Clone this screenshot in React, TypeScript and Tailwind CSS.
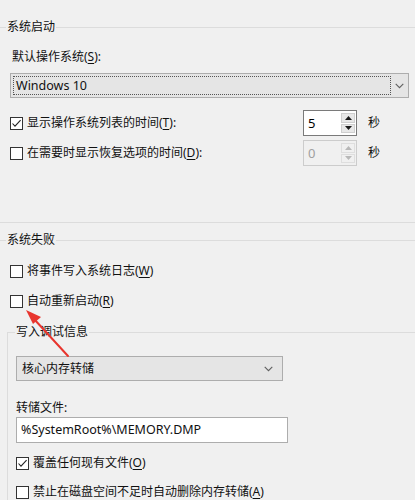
import React from "react";

const FONT = { fontFamily: '"Noto Sans", "Noto Sans CJK SC", sans-serif' };

function Line({ className = "" }: { className?: string }) {
  return <div className={"h-px bg-[#dcdcdc] " + className} />;
}

function Check({ checked = false }: { checked?: boolean }) {
  return (
    <div className="w-[13px] h-[13px] border border-[#333] bg-white flex items-center justify-center shrink-0">
      {checked && (
        <svg width="11" height="11" viewBox="0 0 11 11">
          <path d="M1.5 5.5 L4 8.2 L9.6 2.2" fill="none" stroke="#222" strokeWidth="1.1" />
        </svg>
      )}
    </div>
  );
}

function Chevron() {
  return (
    <svg width="9" height="6" viewBox="0 0 9 6">
      <path d="M0.7 0.8 L4.5 4.6 L8.3 0.8" fill="none" stroke="#606060" strokeWidth="1.1" />
    </svg>
  );
}

function U({ c }: { c: string }) {
  return <span className="underline underline-offset-2">{c}</span>;
}

function Spin({ value, disabled = false }: { value: string; disabled?: boolean }) {
  const tri = disabled ? "#b8b8b8" : "#1a1a1a";
  return (
    <div
      className={
        "w-[54px] h-[26px] border flex " +
        (disabled ? "border-[#cccccc] bg-[#f0f0f0]" : "border-[#7a7a7a] bg-white")
      }
    >
      <div className={"flex-1 flex items-center pl-[4px] text-[13px] " + (disabled ? "text-[#a0a0a0]" : "text-black")}>
        {value}
      </div>
      <div className="w-[15px] flex flex-col gap-px py-[2px] pr-[1px]">
        <div className={"flex-1 flex items-center justify-center border " + (disabled ? "border-[#dedede] bg-[#f0f0f0]" : "border-[#cfcfcf] bg-[#e8e8e8]")}>
          <svg width="7" height="4" viewBox="0 0 7 4"><path d="M0 4 L3.5 0 L7 4 Z" fill={tri} /></svg>
        </div>
        <div className={"flex-1 flex items-center justify-center border " + (disabled ? "border-[#dedede] bg-[#f0f0f0]" : "border-[#cfcfcf] bg-[#e8e8e8]")}>
          <svg width="7" height="4" viewBox="0 0 7 4"><path d="M0 0 L3.5 4 L7 0 Z" fill={tri} /></svg>
        </div>
      </div>
    </div>
  );
}

export default function App() {
  return (
    <div className="relative w-[415px] h-[500px] overflow-hidden bg-[#f0f0f0] text-[12px] text-[#111] leading-[14px]" style={FONT}>
      {/* 系统启动 group header */}
      <div className="mt-[20px] h-[14px] flex items-center">
        <Line className="w-[6px]" />
        <span className="px-[1px]">系统启动</span>
        <Line className="flex-1" />
      </div>

      <div className="mt-[16px] h-[14px] pl-[12px]">
        默认操作系统(<U c="S" />):
      </div>

      <div className="mt-[9px] ml-[10px] w-[399px] h-[25px] border border-[#adadad] bg-[#e5e5e5] flex items-center">
        <div className="ml-[2px] w-[378px] h-[19px] border border-dotted border-[#555] flex items-center pl-[2px] text-[12.5px] text-[#111]">
          Windows 10
        </div>
        <div className="flex-1 flex items-center justify-center">
          <Chevron />
        </div>
      </div>

      <div className="mt-[12px] h-[26px] flex items-center">
        <div className="w-[303px] flex items-center pl-[10px] gap-[4px]">
          <Check checked />
          <span>显示操作系统列表的时间(<U c="T" />):</span>
        </div>
        <Spin value="5" />
        <span className="ml-[11px]">秒</span>
      </div>

      <div className="mt-[4px] h-[26px] flex items-center">
        <div className="w-[303px] flex items-center pl-[10px] gap-[4px]">
          <Check />
          <span>在需要时显示恢复选项的时间(<U c="D" />):</span>
        </div>
        <Spin value="0" disabled />
        <span className="ml-[11px]">秒</span>
      </div>

      <Line className="mt-[56px] w-full" />

      {/* 系统失败 group header */}
      <div className="mt-[10px] h-[14px] flex items-center">
        <Line className="w-[6px]" />
        <span className="px-[1px]">系统失败</span>
        <Line className="flex-1" />
      </div>

      <div className="mt-[14px] h-[20px] flex items-center pl-[10px] gap-[4px]">
        <Check />
        <span>将事件写入系统日志(<U c="W" />)</span>
      </div>

      <div className="mt-[10px] h-[20px] flex items-center pl-[10px] gap-[4px]">
        <Check />
        <span>自动重新启动(<U c="R" />)</span>
      </div>

      {/* 写入调试信息 sub group */}
      <div className="ml-[7px] mt-[14px]">
        <div className="h-[14px] flex items-end">
          <div className="w-[8px] h-[7px] border-l border-t border-[#dcdcdc]" />
          <span className="px-[1px] self-center">写入调试信息</span>
          <div className="flex-1 h-[7px] border-t border-[#dcdcdc]" />
        </div>
        <div className="border-l border-[#dcdcdc] pl-[8px] pb-[20px]">
          <div className="pt-[17px]">
            <div className="w-[267px] h-[25px] border border-[#adadad] bg-[#e5e5e5] flex items-center">
              <span className="pl-[5px] flex-1">核心内存转储</span>
              <div className="pr-[9px]"><Chevron /></div>
            </div>
          </div>
          <div className="mt-[20px] h-[14px]">转储文件:</div>
          <div className="mt-[2px] w-[272px] h-[26px] border border-[#adadad] bg-white flex items-center pl-[4px] text-[12.5px] text-[#111]">
            %SystemRoot%\MEMORY.DMP
          </div>
          <div className="mt-[10px] h-[20px] flex items-center gap-[4px]">
            <Check checked />
            <span>覆盖任何现有文件(<U c="O" />)</span>
          </div>
          <div className="mt-[9px] h-[20px] flex items-center gap-[4px]">
            <Check />
            <span>禁止在磁盘空间不足时自动删除内存转储(<U c="A" />)</span>
          </div>
        </div>
      </div>

      {/* red arrow annotation */}
      <svg className="absolute left-0 top-0 pointer-events-none" width="415" height="500" viewBox="0 0 415 500">
        <line x1="68" y1="356" x2="34" y2="319" stroke="#e8352e" strokeWidth="2" strokeLinecap="round" />
        <path d="M26 310 L41 317 L33 324 Z" fill="#e8352e" />
      </svg>
    </div>
  );
}
